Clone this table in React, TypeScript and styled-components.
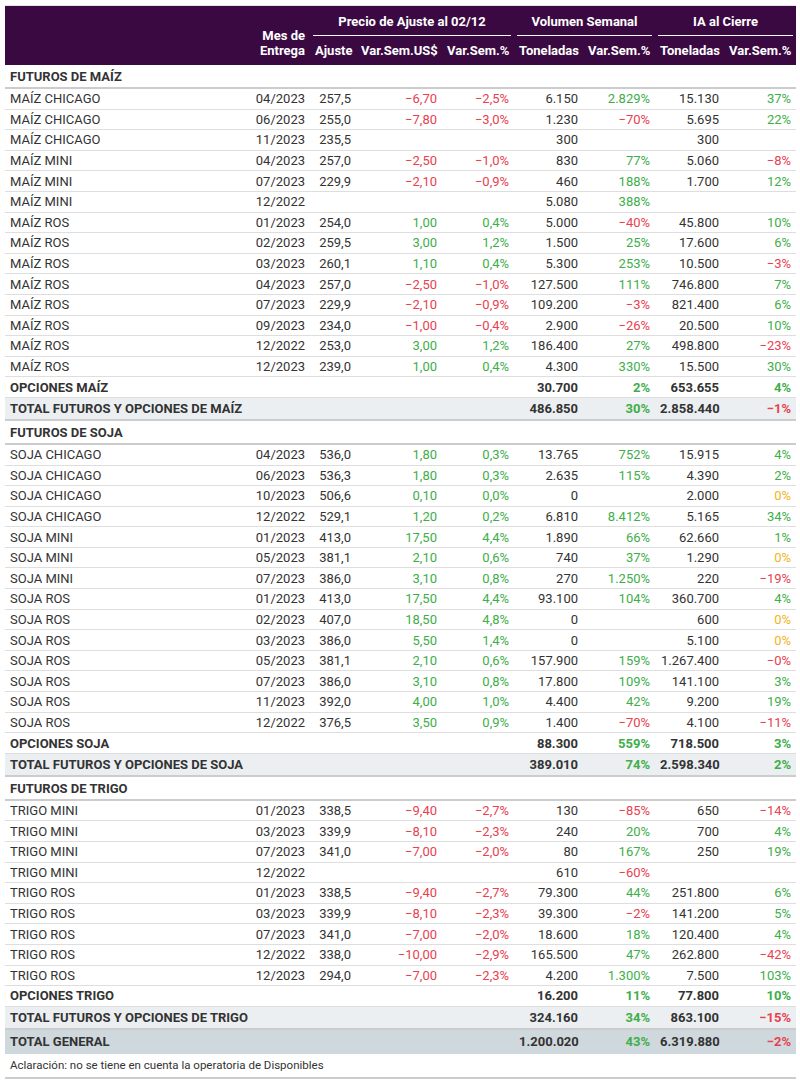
import React from 'react';
import styled, { createGlobalStyle, css } from 'styled-components';

const GlobalStyle = createGlobalStyle`
  html, body {
    margin: 0;
    padding: 0;
    background: #ffffff;
  }
  body {
    font-family: Roboto, "Noto Sans", "Liberation Sans", sans-serif;
    color: #333333;
  }
`;

const colors = {
  head: '#3b0942',
  red: '#e8414f',
  green: '#3eae4a',
  amber: '#f2b320',
  border: '#dedede',
  strong: '#cccccc',
  total: '#eceff1',
  grand: '#cfd8dc',
};

type Row = [string, string, string, string, string, string, string, string, string];

const maiz: Row[] = [
  ['MAÍZ CHICAGO', '04/2023', '257,5', '−6,70', '−2,5%', '6.150', '2.829%', '15.130', '37%'],
  ['MAÍZ CHICAGO', '06/2023', '255,0', '−7,80', '−3,0%', '1.230', '−70%', '5.695', '22%'],
  ['MAÍZ CHICAGO', '11/2023', '235,5', '', '', '300', '', '300', ''],
  ['MAÍZ MINI', '04/2023', '257,0', '−2,50', '−1,0%', '830', '77%', '5.060', '−8%'],
  ['MAÍZ MINI', '07/2023', '229,9', '−2,10', '−0,9%', '460', '188%', '1.700', '12%'],
  ['MAÍZ MINI', '12/2022', '', '', '', '5.080', '388%', '', ''],
  ['MAÍZ ROS', '01/2023', '254,0', '1,00', '0,4%', '5.000', '−40%', '45.800', '10%'],
  ['MAÍZ ROS', '02/2023', '259,5', '3,00', '1,2%', '1.500', '25%', '17.600', '6%'],
  ['MAÍZ ROS', '03/2023', '260,1', '1,10', '0,4%', '5.300', '253%', '10.500', '−3%'],
  ['MAÍZ ROS', '04/2023', '257,0', '−2,50', '−1,0%', '127.500', '111%', '746.800', '7%'],
  ['MAÍZ ROS', '07/2023', '229,9', '−2,10', '−0,9%', '109.200', '−3%', '821.400', '6%'],
  ['MAÍZ ROS', '09/2023', '234,0', '−1,00', '−0,4%', '2.900', '−26%', '20.500', '10%'],
  ['MAÍZ ROS', '12/2022', '253,0', '3,00', '1,2%', '186.400', '27%', '498.800', '−23%'],
  ['MAÍZ ROS', '12/2023', '239,0', '1,00', '0,4%', '4.300', '330%', '15.500', '30%'],
];

const soja: Row[] = [
  ['SOJA CHICAGO', '04/2023', '536,0', '1,80', '0,3%', '13.765', '752%', '15.915', '4%'],
  ['SOJA CHICAGO', '06/2023', '536,3', '1,80', '0,3%', '2.635', '115%', '4.390', '2%'],
  ['SOJA CHICAGO', '10/2023', '506,6', '0,10', '0,0%', '0', '', '2.000', '0%'],
  ['SOJA CHICAGO', '12/2022', '529,1', '1,20', '0,2%', '6.810', '8.412%', '5.165', '34%'],
  ['SOJA MINI', '01/2023', '413,0', '17,50', '4,4%', '1.890', '66%', '62.660', '1%'],
  ['SOJA MINI', '05/2023', '381,1', '2,10', '0,6%', '740', '37%', '1.290', '0%'],
  ['SOJA MINI', '07/2023', '386,0', '3,10', '0,8%', '270', '1.250%', '220', '−19%'],
  ['SOJA ROS', '01/2023', '413,0', '17,50', '4,4%', '93.100', '104%', '360.700', '4%'],
  ['SOJA ROS', '02/2023', '407,0', '18,50', '4,8%', '0', '', '600', '0%'],
  ['SOJA ROS', '03/2023', '386,0', '5,50', '1,4%', '0', '', '5.100', '0%'],
  ['SOJA ROS', '05/2023', '381,1', '2,10', '0,6%', '157.900', '159%', '1.267.400', '−0%'],
  ['SOJA ROS', '07/2023', '386,0', '3,10', '0,8%', '17.800', '109%', '141.100', '3%'],
  ['SOJA ROS', '11/2023', '392,0', '4,00', '1,0%', '4.400', '42%', '9.200', '19%'],
  ['SOJA ROS', '12/2022', '376,5', '3,50', '0,9%', '1.400', '−70%', '4.100', '−11%'],
];

const trigo: Row[] = [
  ['TRIGO MINI', '01/2023', '338,5', '−9,40', '−2,7%', '130', '−85%', '650', '−14%'],
  ['TRIGO MINI', '03/2023', '339,9', '−8,10', '−2,3%', '240', '20%', '700', '4%'],
  ['TRIGO MINI', '07/2023', '341,0', '−7,00', '−2,0%', '80', '167%', '250', '19%'],
  ['TRIGO MINI', '12/2022', '', '', '', '610', '−60%', '', ''],
  ['TRIGO ROS', '01/2023', '338,5', '−9,40', '−2,7%', '79.300', '44%', '251.800', '6%'],
  ['TRIGO ROS', '03/2023', '339,9', '−8,10', '−2,3%', '39.300', '−2%', '141.200', '5%'],
  ['TRIGO ROS', '07/2023', '341,0', '−7,00', '−2,0%', '18.600', '18%', '120.400', '4%'],
  ['TRIGO ROS', '12/2022', '338,0', '−10,00', '−2,9%', '165.500', '47%', '262.800', '−42%'],
  ['TRIGO ROS', '12/2023', '294,0', '−7,00', '−2,3%', '4.200', '1.300%', '7.500', '103%'],
];

type Summary = [string, string, string, string, string];

type Section = {
  title: string;
  rows: Row[];
  options: Summary;
  total: Summary;
};

const sections: Section[] = [
  {
    title: 'FUTUROS DE MAÍZ',
    rows: maiz,
    options: ['OPCIONES MAÍZ', '30.700', '2%', '653.655', '4%'],
    total: ['TOTAL FUTUROS Y OPCIONES DE MAÍZ', '486.850', '30%', '2.858.440', '−1%'],
  },
  {
    title: 'FUTUROS DE SOJA',
    rows: soja,
    options: ['OPCIONES SOJA', '88.300', '559%', '718.500', '3%'],
    total: ['TOTAL FUTUROS Y OPCIONES DE SOJA', '389.010', '74%', '2.598.340', '2%'],
  },
  {
    title: 'FUTUROS DE TRIGO',
    rows: trigo,
    options: ['OPCIONES TRIGO', '16.200', '11%', '77.800', '10%'],
    total: ['TOTAL FUTUROS Y OPCIONES DE TRIGO', '324.160', '34%', '863.100', '−15%'],
  },
];

type Tone = 'red' | 'green' | 'amber' | 'plain';

const toneOf = (v: string): Tone => {
  if (!v) return 'plain';
  if (v === '0%') return 'amber';
  if (v.startsWith('−')) return 'red';
  return 'green';
};

const Page = styled.div`
  padding: 5px 4px 4px 5px;
`;

const Table = styled.table`
  width: 791px;
  table-layout: fixed;
  border-collapse: collapse;
  font-size: 13px;
  border-top: 1px solid #e4e4e4;
`;

const Head = styled.thead`
  background: ${colors.head};
  color: #ffffff;
`;

// header cell for the two-line "Mes de Entrega" and the empty name column
const Th = styled.th<{ $align?: 'left' | 'right' }>`
  font-weight: 700;
  font-size: 13px;
  text-align: ${({ $align = 'right' }) => $align};
  vertical-align: bottom;
  padding: 0 5px 7px;
  line-height: 15px;
  white-space: nowrap;
`;

const SubTh = styled.th`
  font-weight: 700;
  font-size: 13px;
  text-align: right;
  vertical-align: bottom;
  padding: 7px 5px 7px;
  line-height: 15px;
  white-space: nowrap;
`;

const GroupTh = styled.th`
  font-weight: 700;
  font-size: 13px;
  text-align: center;
  padding: 0 4px;
  vertical-align: bottom;
  line-height: 15px;
`;

const GroupLabel = styled.div`
  margin: 0 -1px;
  padding: 8px 0 6px;
  border-bottom: 1px solid #ffffff;
`;

type Kind = 'data' | 'section' | 'options' | 'total' | 'grand' | 'note';

const Tr = styled.tr<{ $kind?: Kind }>`
  ${({ $kind = 'data' }) => {
    switch ($kind) {
      case 'section':
        return css`
          td {
            font-weight: 700;
            height: 21px;
            padding-top: 1px;
            border-bottom: 2px solid ${colors.strong};
          }
        `;
      case 'options':
        return css`
          td {
            font-weight: 700;
            height: 19.6px;
            border-bottom: 1px solid ${colors.border};
          }
        `;
      case 'total':
        return css`
          td {
            font-weight: 700;
            background: ${colors.total};
            height: 21px;
            border-bottom: 2px solid ${colors.strong};
          }
        `;
      case 'grand':
        return css`
          td {
            font-weight: 700;
            background: ${colors.grand};
            height: 24px;
            border-bottom: 0;
          }
        `;
      case 'note':
        return css`
          td {
            font-size: 11.5px;
            height: 23px;
            border-bottom: 2px solid ${colors.strong};
          }
        `;
      default:
        return css`
          td {
            height: 19.6px;
            border-bottom: 1px solid ${colors.border};
          }
        `;
    }
  }}
`;

const Td = styled.td<{ $align?: 'left' | 'right'; $tone?: Tone }>`
  padding: 0 5px;
  line-height: 15px;
  white-space: nowrap;
  text-align: ${({ $align = 'right' }) => $align};
  color: ${({ $tone = 'plain' }) =>
    $tone === 'red'
      ? colors.red
      : $tone === 'green'
      ? colors.green
      : $tone === 'amber'
      ? colors.amber
      : '#333333'};
`;

const widths = [245, 60, 46, 86, 72, 69, 72, 69, 72];

const DataRow = ({ r }: { r: Row }) => (
  <Tr>
    <Td $align="left">{r[0]}</Td>
    <Td>{r[1]}</Td>
    <Td>{r[2]}</Td>
    <Td $tone={toneOf(r[3])}>{r[3]}</Td>
    <Td $tone={toneOf(r[4])}>{r[4]}</Td>
    <Td>{r[5]}</Td>
    <Td $tone={toneOf(r[6])}>{r[6]}</Td>
    <Td>{r[7]}</Td>
    <Td $tone={toneOf(r[8])}>{r[8]}</Td>
  </Tr>
);

const SummaryRow = ({ kind, v }: { kind: 'options' | 'total' | 'grand'; v: Summary }) => (
  <Tr $kind={kind}>
    <Td $align="left" colSpan={5}>
      {v[0]}
    </Td>
    <Td>{v[1]}</Td>
    <Td $tone={toneOf(v[2])}>{v[2]}</Td>
    <Td>{v[3]}</Td>
    <Td $tone={toneOf(v[4])}>{v[4]}</Td>
  </Tr>
);

export default function App() {
  return (
    <Page>
      <GlobalStyle />
      <Table>
        <colgroup>
          {widths.map((w, i) => (
            <col key={i} style={{ width: w }} />
          ))}
        </colgroup>
        <Head>
          <tr>
            <Th rowSpan={2} $align="left" />
            <Th rowSpan={2}>
              Mes de
              <br />
              Entrega
            </Th>
            <GroupTh colSpan={3}>
              <GroupLabel>Precio de Ajuste al 02/12</GroupLabel>
            </GroupTh>
            <GroupTh colSpan={2}>
              <GroupLabel>Volumen Semanal</GroupLabel>
            </GroupTh>
            <GroupTh colSpan={2}>
              <GroupLabel>IA al Cierre</GroupLabel>
            </GroupTh>
          </tr>
          <tr>
            <SubTh>Ajuste</SubTh>
            <SubTh>Var.Sem.US$</SubTh>
            <SubTh>Var.Sem.%</SubTh>
            <SubTh>Toneladas</SubTh>
            <SubTh>Var.Sem.%</SubTh>
            <SubTh>Toneladas</SubTh>
            <SubTh>Var.Sem.%</SubTh>
          </tr>
        </Head>
        <tbody>
          {sections.map((s) => (
            <React.Fragment key={s.title}>
              <Tr $kind="section">
                <Td $align="left" colSpan={9}>
                  {s.title}
                </Td>
              </Tr>
              {s.rows.map((r, i) => (
                <DataRow key={i} r={r} />
              ))}
              <SummaryRow kind="options" v={s.options} />
              <SummaryRow kind="total" v={s.total} />
            </React.Fragment>
          ))}
          <SummaryRow kind="grand" v={['TOTAL GENERAL', '1.200.020', '43%', '6.319.880', '−2%']} />
          <Tr $kind="note">
            <Td $align="left" colSpan={9}>
              Aclaración: no se tiene en cuenta la operatoria de Disponibles
            </Td>
          </Tr>
        </tbody>
      </Table>
    </Page>
  );
}
